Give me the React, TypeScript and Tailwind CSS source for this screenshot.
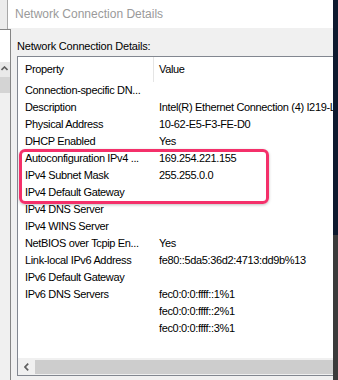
import React from "react";

const rows: [string, string][] = [
  ["Connection-specific DN...", ""],
  ["Description", "Intel(R) Ethernet Connection (4) I219-LM"],
  ["Physical Address", "10-62-E5-F3-FE-D0"],
  ["DHCP Enabled", "Yes"],
  ["Autoconfiguration IPv4 ...", "169.254.221.155"],
  ["IPv4 Subnet Mask", "255.255.0.0"],
  ["IPv4 Default Gateway", ""],
  ["IPv4 DNS Server", ""],
  ["IPv4 WINS Server", ""],
  ["NetBIOS over Tcpip En...", "Yes"],
  ["Link-local IPv6 Address", "fe80::5da5:36d2:4713:dd9b%13"],
  ["IPv6 Default Gateway", ""],
  ["IPv6 DNS Servers", "fec0:0:0:ffff::1%1"],
  ["", "fec0:0:0:ffff::2%1"],
  ["", "fec0:0:0:ffff::3%1"],
];

function FrontWindowEdge() {
  // the window lying in front of the dialog, only its right edge shows
  return (
    <div className="absolute left-0 top-[29px] flex h-[351px] w-[11px] flex-col border-r border-t border-[#858585]">
      <div className="h-[32px] bg-white" />
      <div className="relative h-[15px] bg-[#e9e9e9]">
        <svg className="absolute left-[1px] top-[4px]" width="7" height="5" viewBox="0 0 7 5">
          <polyline points="0.5,4 3.5,1 6.5,4" fill="none" stroke="#606060" strokeWidth="1.6" />
        </svg>
      </div>
      <div className="h-[16px] bg-[#d4d4d4]" />
      <div className="flex-1 bg-[#f0f0f0]" />
    </div>
  );
}

export default function App() {
  return (
    <div
      className="relative flex h-[380px] w-[338px] overflow-hidden bg-[#ececec] text-black"
      style={{ fontFamily: '"Liberation Sans", Arial, sans-serif' }}
    >
      <div className="w-[7px] shrink-0 bg-[#ececec]" />

      <div className="flex w-[326px] shrink-0 flex-col overflow-hidden border-l border-[#a8a8a8]">
        <div className="flex h-[28px] shrink-0 items-center bg-white pb-[1px] pl-[7px] text-[12px] text-[#9a9a9a]">
          Network Connection Details
        </div>

        <div className="flex flex-1 flex-col bg-[#f0f0f0] pl-[9px]">
          <div className="mb-[1px] mt-[9px] h-[18px] text-[11px] leading-[18px] tracking-[-0.2px]">
            Network Connection Details:
          </div>

          <div className="relative flex h-[320px] flex-col overflow-hidden border border-r-0 border-[#828790] bg-white text-[11px] tracking-[-0.35px]">
            <div className="flex h-[25px] shrink-0 items-center">
              <div className="w-[135px] pl-[7px]">Property</div>
              <div className="h-full w-px bg-[#e5e5e5]" />
              <div className="pl-[5px]">Value</div>
            </div>

            {rows.map(([name, value], i) => (
              <div key={i} className="flex h-[17px] shrink-0 items-center whitespace-nowrap">
                <div className="w-[141px] shrink-0 pl-[7px]">{name}</div>
                <div>{value}</div>
              </div>
            ))}

            <div className="flex-1" />

            <div className="flex h-[17px] shrink-0 bg-[#f0f0f0]">
              <div className="flex w-[17px] items-center justify-center">
                <svg width="5" height="8" viewBox="0 0 5 8">
                  <polyline points="4.2,0.6 1,4 4.2,7.4" fill="none" stroke="#606060" strokeWidth="1.7" />
                </svg>
              </div>
              <div className="mb-[1px] mt-[2px] flex-1 bg-[#cdcdcd]" />
            </div>

            <div className="absolute left-px top-[92px] h-[55px] w-[250px] rounded-[6px] border-[3px] border-[#f4306a] shadow-[0_1px_3px_rgba(0,0,0,0.25)]" />
          </div>
        </div>
      </div>

      <div className="flex w-[5px] shrink-0 flex-col">
        <div className="h-[235px] bg-[#0e1a2f]" />
        <div className="flex-1 bg-[#3b3b3b]" />
      </div>

      <FrontWindowEdge />
    </div>
  );
}
